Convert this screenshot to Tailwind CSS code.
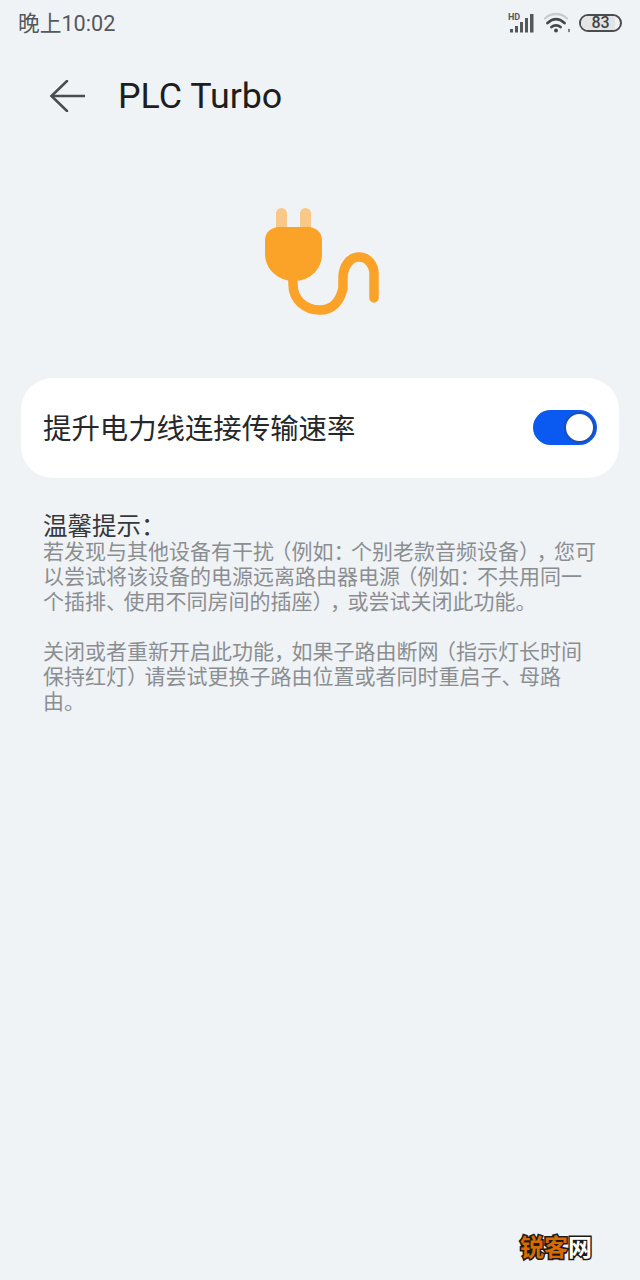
<!DOCTYPE html>
<html lang="zh-CN">
<head>
  <meta charset="UTF-8" />
  <meta name="viewport" content="width=device-width, initial-scale=1.0" />
  <title>PLC Turbo</title>
  <script src="https://cdn.jsdelivr.net/npm/@tailwindcss/browser@4"></script>
</head>
<body class="bg-[#f0f3f6] font-['Roboto','Noto_Sans_CJK_SC',sans-serif]">
  <div class="relative w-[640px] h-[1280px] overflow-hidden">

    <!-- status bar -->
    <div class="h-[48px] pl-[18px] pr-[18px] flex items-center justify-between text-[#55585b]">
      <span class="text-[21.7px] leading-none">晚上10:02</span>
      <div class="flex items-center gap-[8px] -mt-[3px]">
        <svg width="28" height="22" viewBox="0 0 28 22" fill="#55585b">
          <text x="0" y="8" font-size="9" font-weight="700" font-family="Roboto">HD</text>
          <rect x="2" y="17" width="3" height="3.500"/>
          <rect x="7" y="14" width="3" height="6.500"/>
          <rect x="12" y="10" width="3" height="10.500"/>
          <rect x="17" y="6" width="3" height="14.500"/>
          <rect x="22" y="2" width="3.500" height="18.500"/>
        </svg>
        <svg width="27" height="22" viewBox="0 0 27 22" fill="none" stroke-linecap="round">
          <path d="M1 6.500C7 .5 17 .5 23 6.500" stroke="#c9cbcd" stroke-width="2.400"/>
          <path d="M3.500 11C9 6 15 6 20.500 11" stroke="#45484b" stroke-width="2.800"/>
          <path d="M7.500 15C10 12.800 14 12.800 16.500 15" stroke="#45484b" stroke-width="2.800"/>
          <circle cx="12" cy="18.500" r="2" fill="#45484b"/>
          <path d="M25 17.500V19.500" stroke="#55585b" stroke-width="1.500"/>
        </svg>
        <div class="relative w-[43px] h-[18px] rounded-full border-2 border-[#4a4d50] overflow-hidden flex items-center justify-center">
          <div class="absolute left-0 top-0 bottom-0 w-[34px] bg-[#e2e4e6]"></div>
          <span class="relative text-[16px] leading-none font-medium text-[#3f4245]">83</span>
        </div>
      </div>
    </div>

    <!-- header -->
    <div class="h-[96px] pl-[50px] flex items-center gap-[33px]">
      <svg width="35" height="32" viewBox="0 0 35 32" fill="none" stroke="#4a4d50" stroke-width="2.500" stroke-linecap="round" stroke-linejoin="round">
        <path d="M17 1L1.500 16L17 31"/>
        <path d="M1.500 16H34.500"/>
      </svg>
      <h1 class="text-[35.800px] leading-none text-[#1c1e20] font-normal pt-[2px]">PLC Turbo</h1>
    </div>

    <!-- plug icon -->
    <div class="pt-[64px] pl-[264px] h-[234px]">
      <svg width="116" height="108" viewBox="0 0 116 108" fill="none">
        <rect x="12" y="0" width="11" height="28" rx="5.500" fill="#f9c887"/>
        <rect x="36" y="0" width="11" height="28" rx="5.500" fill="#f9c887"/>
        <path d="M29 70V76C29 92 41 102 56 102C68 102 76 94 79 80V70C79 58 86 49 95 49C104 49 110 57 110 66V90" stroke="#fba229" stroke-width="9.500" stroke-linecap="round" stroke-linejoin="round"/>
        <path d="M1 32C1 24 8 19 15 19H44C51 19 58 24 58 32V46C58 61 46 73 30 73C14 73 1 61 1 46Z" fill="#fba229"/>
      </svg>
    </div>

    <!-- toggle card -->
    <div class="mx-[21px] h-[100px] rounded-[32px] bg-white pl-[22px] pr-[22px] flex items-center justify-between">
      <span class="text-[28.400px] leading-none text-[#26282a] pt-[5px]">提升电力线连接传输速率</span>
      <div class="w-[64px] h-[35px] -mt-[2px] rounded-full bg-[#0a59f0] flex items-center justify-end pr-[2px]">
        <div class="w-[31px] h-[31px] rounded-full bg-white border-2 border-[#1c50b8]"></div>
      </div>
    </div>

    <!-- notes -->
    <div class="mt-[36px] mx-[43px] [text-spacing-trim:space-all]">
      <p class="text-[24.500px] leading-[25px] text-[#36383b] whitespace-nowrap">温馨提示：</p>
      <p class="pt-[1px] text-[21px] leading-[25px] text-[#8b8e91] whitespace-nowrap">若发现与其他设备有干<span class="tracking-[-3.5px]">扰</span>（例如<span class="tracking-[-3.5px]">：</span>个别老款音频设备<span class="tracking-[-3.5px]">）</span><span class="tracking-[-3.5px]">，</span>您可<br>以尝试将该设备的电源远离路由器电<span class="tracking-[-3.5px]">源</span>（例如<span class="tracking-[-3.5px]">：</span>不共用同一<br>个插排<span class="tracking-[-3.5px]">、</span>使用不同房间的插座<span class="tracking-[-3.5px]">）</span><span class="tracking-[-3.5px]">，</span>或尝试关闭此功能。</p>
      <p class="mt-[25px] text-[21px] leading-[25px] text-[#8b8e91] whitespace-nowrap">关闭或者重新开启此功能<span class="tracking-[-3.5px]">，</span>如果子路由断<span class="tracking-[-3.5px]">网</span>（指示灯长时间<br>保持红灯<span class="tracking-[-3.5px]">）</span>请尝试更换子路由位置或者同时重启子<span class="tracking-[-3.5px]">、</span>母路<br>由。</p>
    </div>

    <!-- watermark -->
    <div class="absolute left-[520px] top-[1236px] text-[24px] leading-none font-bold whitespace-nowrap flex">
      <span class="text-[#d96a00] [-webkit-text-stroke:3px_#1a1a1a] [paint-order:stroke_fill]">锐客</span><span class="text-white [-webkit-text-stroke:3px_#1a1a1a] [paint-order:stroke_fill]">网</span>
    </div>
  </div>
</body>
</html>
